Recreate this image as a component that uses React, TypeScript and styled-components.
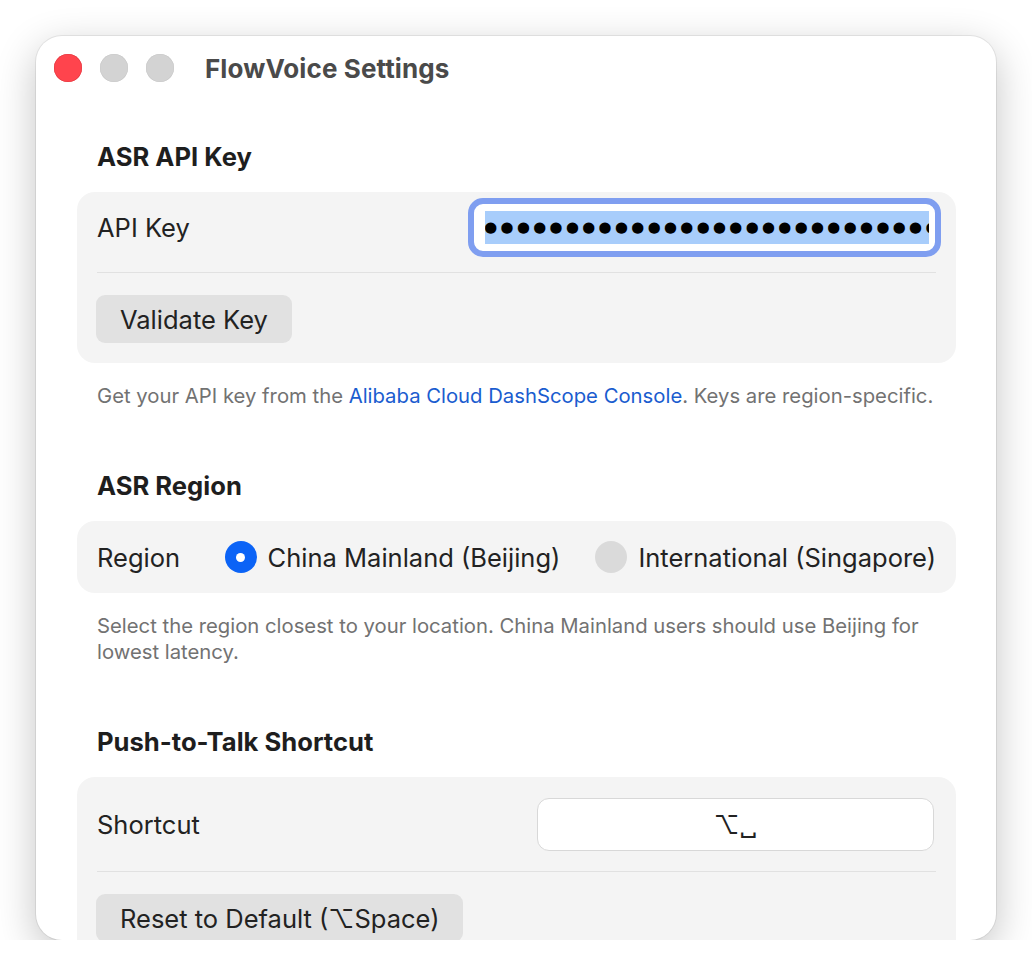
import React from "react";
import styled, { createGlobalStyle } from "styled-components";

const GlobalStyle = createGlobalStyle`
  html, body { margin: 0; padding: 0; background: #ffffff; }
  body { font-family: Inter, "Noto Sans", "DejaVu Sans", sans-serif; color: #222; }
  * { box-sizing: border-box; }
`;

const Window = styled.div`
  margin: 36px 0 0 36px;
  width: 960px;
  height: 904px;
  border-radius: 26px;
  overflow: hidden;
  background: #ffffff;
  box-shadow: 0 0 0 1px rgba(0, 0, 0, 0.07), 0 12px 40px rgba(0, 0, 0, 0.24);
`;

const TitleBar = styled.div`
  display: flex;
  align-items: center;
  gap: 18px;
  height: 64px;
  padding: 0 18px;
`;

const Light = styled.span<{ $color: string; $ring: string }>`
  width: 28px;
  height: 28px;
  border-radius: 50%;
  background: ${(p) => p.$color};
  box-shadow: inset 0 0 0 0.5px ${(p) => p.$ring};
  flex: none;
`;

const Title = styled.h1`
  margin: 0 0 0 13px;
  font-size: 26px;
  font-weight: 700;
  color: #4a4a4a;
  letter-spacing: 0.1px;
`;

const Content = styled.div`
  padding: 0 40px 0 41px;
`;

const Section = styled.section<{ $top: number }>`
  margin-top: ${(p) => p.$top}px;
`;

const Heading = styled.h2`
  margin: 0 0 21px 20px;
  font-size: 25.6px;
  line-height: 28px;
  font-weight: 700;
  color: #1e1e1e;
`;

const Card = styled.div`
  background: #f4f4f4;
  border-radius: 18px;
  padding: 0 20px;
`;

const Row = styled.div<{ $pt: number; $pb: number }>`
  display: flex;
  align-items: center;
  justify-content: space-between;
  padding: ${(p) => p.$pt}px 0 ${(p) => p.$pb}px;
`;

const Label = styled.span`
  font-size: 25.5px;
  color: #222;
`;

const Divider = styled.div`
  height: 1px;
  background: #e1e1e1;
`;

const ButtonRow = styled.div`
  padding: 22px 0 20px;
`;

const Button = styled.button`
  height: 48px;
  padding: 0 24px;
  margin-left: -1px;
  border: none;
  border-radius: 9px;
  background: #e1e1e1;
  font-family: inherit;
  font-size: 25.5px;
  color: #222;
`;

const KeyField = styled.div`
  width: 473px;
  height: 59px;
  margin-right: -5px;
  border: 6px solid #7f9ef0;
  border-radius: 15px;
  background: #ffffff;
  padding: 7px 6px 7px 11px;
  display: flex;
`;

const Selection = styled.span`
  flex: 1;
  background: #a8cdfb;
  overflow: hidden;
  white-space: nowrap;
  font-family: "DejaVu Sans Mono", monospace;
  font-size: 19px;
  line-height: 31px;
  letter-spacing: 4.9px;
  color: #000;
`;

const Helper = styled.p`
  margin: 20px 20px 0;
  font-size: 20.3px;
  line-height: 26px;
  color: #727272;
`;

const Link = styled.a`
  color: #1a5ccf;
  text-decoration: none;
`;

const RadioGroup = styled.div`
  display: flex;
  align-items: center;
  gap: 35px;
`;

const RadioOption = styled.label`
  display: flex;
  align-items: center;
  gap: 11px;
  font-size: 25.5px;
  color: #222;
`;

const RadioDot = styled.span<{ $on: boolean }>`
  width: 32px;
  height: 32px;
  border-radius: 50%;
  flex: none;
  background: ${(p) => (p.$on ? "#0b63f6" : "#dadada")};
  display: flex;
  align-items: center;
  justify-content: center;
  &::after {
    content: "";
    width: 9px;
    height: 9px;
    border-radius: 50%;
    background: #fff;
    display: ${(p) => (p.$on ? "block" : "none")};
  }
`;

const ShortcutField = styled.div`
  width: 397px;
  height: 53px;
  margin-right: 2px;
  border: 1.5px solid #d8d8d8;
  border-radius: 12px;
  background: #fff;
  display: flex;
  align-items: center;
  justify-content: center;
  font-size: 25px;
  color: #222;
`;

export default function App() {
  const dots = "●".repeat(40);
  return (
    <>
      <GlobalStyle />
      <Window>
        <TitleBar>
          <Light $color="#ff444d" $ring="#e0353d" />
          <Light $color="#d3d3d3" $ring="#c8c8c8" />
          <Light $color="#d3d3d3" $ring="#c8c8c8" />
          <Title>FlowVoice Settings</Title>
        </TitleBar>
        <Content>
          <Section $top={43}>
            <Heading>ASR API Key</Heading>
            <Card>
              <Row $pt={6} $pb={15}>
                <Label>API Key</Label>
                <KeyField>
                  <Selection>{dots}</Selection>
                </KeyField>
              </Row>
              <Divider />
              <ButtonRow>
                <Button>Validate Key</Button>
              </ButtonRow>
            </Card>
            <Helper>
              Get your API key from the <Link href="#">Alibaba Cloud DashScope Console</Link>. Keys are
              region-specific.
            </Helper>
          </Section>
          <Section $top={63}>
            <Heading>ASR Region</Heading>
            <Card>
              <Row $pt={20} $pb={20}>
                <Label>Region</Label>
                <RadioGroup>
                  <RadioOption>
                    <RadioDot $on={true} />
                    China Mainland (Beijing)
                  </RadioOption>
                  <RadioOption>
                    <RadioDot $on={false} />
                    International (Singapore)
                  </RadioOption>
                </RadioGroup>
              </Row>
            </Card>
            <Helper>
              Select the region closest to your location. China Mainland users should use Beijing for lowest
              latency.
            </Helper>
          </Section>
          <Section $top={63}>
            <Heading>Push-to-Talk Shortcut</Heading>
            <Card>
              <Row $pt={21} $pb={20}>
                <Label>Shortcut</Label>
                <ShortcutField>⌥␣</ShortcutField>
              </Row>
              <Divider />
              <ButtonRow>
                <Button>Reset to Default (⌥Space)</Button>
              </ButtonRow>
            </Card>
          </Section>
        </Content>
      </Window>
    </>
  );
}
